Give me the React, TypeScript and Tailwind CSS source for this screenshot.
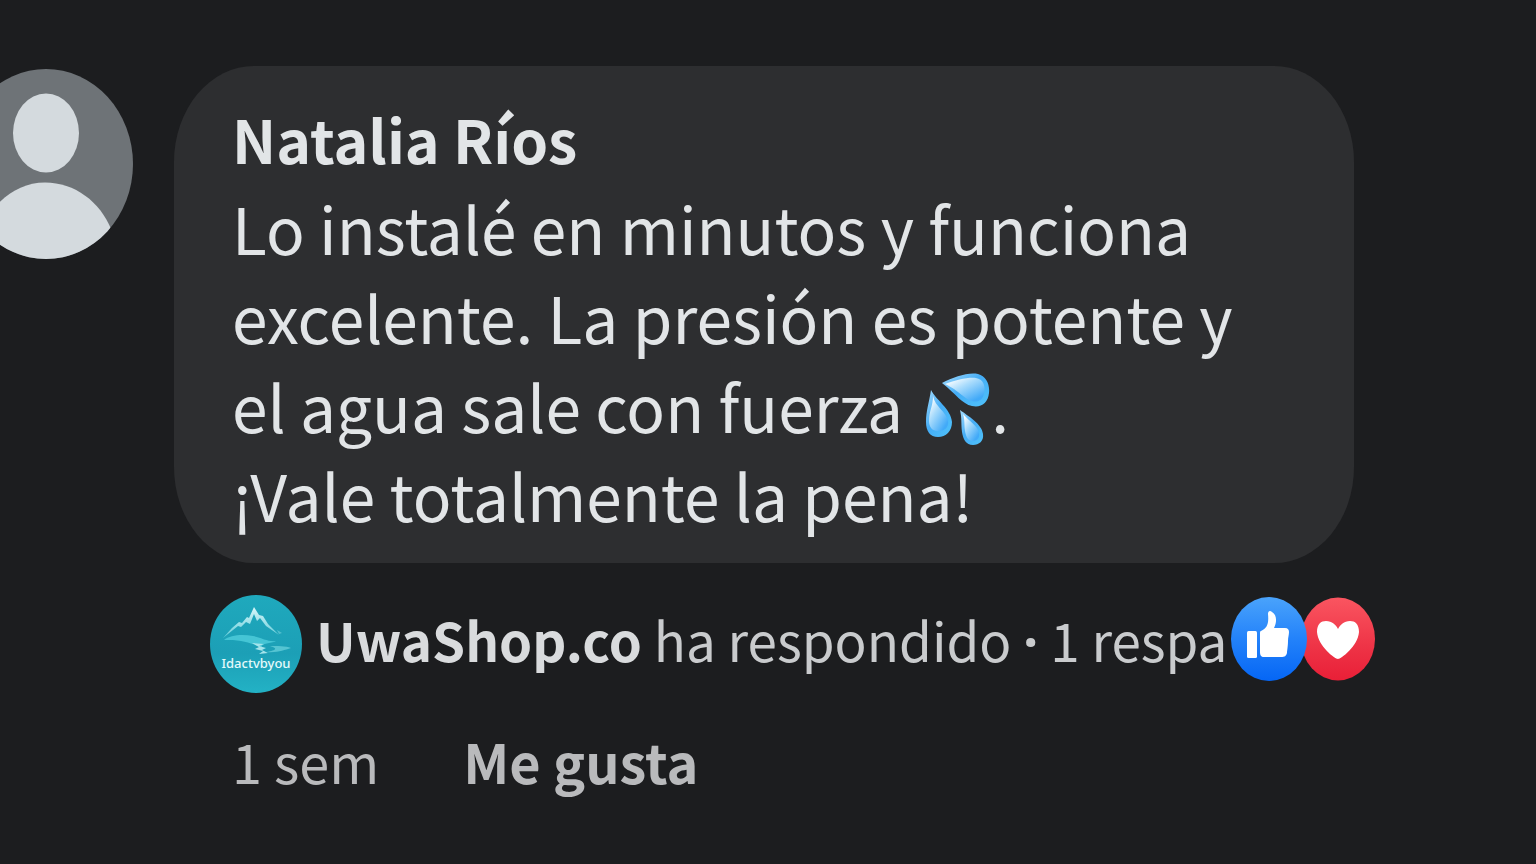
import React from "react";

function Avatar() {
  return (
    <svg
      viewBox="0 0 174 190"
      className="-ml-[41px] mt-[3px] h-[190px] w-[174px] shrink-0"
      role="img"
      aria-label="Natalia Ríos"
    >
      <defs>
        <clipPath id="avatar-clip">
          <ellipse cx="87" cy="95" rx="87" ry="95" />
        </clipPath>
      </defs>
      <g clipPath="url(#avatar-clip)">
        <rect width="174" height="190" fill="#6e7377" />
        <ellipse cx="87" cy="64" rx="33" ry="39.5" fill="#d4dade" />
        <path d="M17 190C17 150 48 113.500 86 113.500C116 113.500 141 133 152 160L152 190Z" fill="#d4dade" />
      </g>
    </svg>
  );
}

function ShopLogo() {
  return (
    <svg viewBox="0 0 92 98" className="h-[98px] w-[92px] shrink-0" role="img" aria-label="UwaShop.co">
      <defs>
        <linearGradient id="shop-bg" x1="0" y1="0" x2="0" y2="1">
          <stop offset="0" stopColor="#1fa9bd" />
          <stop offset="0.6" stopColor="#1c9fb6" />
          <stop offset="1" stopColor="#23b2c5" />
        </linearGradient>
        <linearGradient id="shop-peak" x1="0" y1="0" x2="0" y2="1">
          <stop offset="0" stopColor="#d9f7fa" />
          <stop offset="1" stopColor="#62cbd8" />
        </linearGradient>
      </defs>
      <ellipse cx="46" cy="49" rx="46" ry="49" fill="url(#shop-bg)" />
      <path
        d="M13 43L22 33L29 27L32 28L37 22L39 23L44 12L49 20L53 21L58 29L69 40L56 31L50 23L47 26L44 19L40 29L36 27L31 32L28 31Z"
        fill="url(#shop-peak)"
      />
      <path d="M67 35L72 38L69 39Z" fill="#54bfce" />
      <path d="M14 45C20 40 32 39 43 41C52 43 58 47 66 46C60 49 50 48 52 53C46 50 34 44 14 45Z" fill="#45c5d5" />
      <path d="M42 48L54 49L49 51L56 53L52 55L58 58L49 59L53 56L45 54L49 52Z" fill="#a5e4eb" />
      <path d="M56 57C68 58 74 55 81 53C76 51 67 51 60 51C67 53 68 55 56 57Z" fill="#55c4d2" />
      <text
        x="46"
        y="73"
        textAnchor="middle"
        fill="#e3fafb"
        fontFamily="'Noto Sans', sans-serif"
        fontWeight="500"
        fontSize="13"
      >
        Idactvbyou
      </text>
    </svg>
  );
}

function Droplets() {
  return (
    <svg viewBox="0 0 66 74" className="ml-2 inline-block h-[74px] w-[66px] align-[-14px]" role="img" aria-label="💦">
      <defs>
        <linearGradient id="drop-edge" x1="0" y1="0" x2="1" y2="1">
          <stop offset="0" stopColor="#a9defd" />
          <stop offset="0.45" stopColor="#45adf6" />
          <stop offset="1" stopColor="#4fc2fb" />
        </linearGradient>
        <linearGradient id="drop-fill" x1="0.1" y1="0.1" x2="0.8" y2="0.9">
          <stop offset="0" stopColor="#ffffff" />
          <stop offset="0.4" stopColor="#aadcfc" />
          <stop offset="1" stopColor="#42aaf8" />
        </linearGradient>
      </defs>
      <g fill="url(#drop-edge)">
        <path d="M17 10C29 4 43-1 53 1C61 3 65 11 64 20C63 30 56 35 47 33C37 31 31 21 17 10Z" />
        <path d="M6 17C11 27 26 36 27 49C27 58 21 64 13 64C5 64 1 58 1 49C1 38 4 30 6 17Z" />
        <path d="M35 37C43 43 57 51 58 61C59 68 54 72 48 72C41 72 38 66 37 59C36 51 37 45 35 37Z" />
      </g>
      <g fill="url(#drop-fill)">
        <path d="M20 11C31 7 43 4 51 5C58 6 61 13 59 20C58 27 53 30 47 28C39 26 35 18 20 11Z" />
        <path d="M8 23C10 34 21 38 23 48C24 55 19 58 13 58C7 58 4 54 4 48C4 38 8 33 8 23Z" />
        <path d="M38 41C44 48 53 53 54 60C55 65 52 68 48 68C43 68 41 64 40 58C39 51 40 47 38 41Z" />
      </g>
    </svg>
  );
}

function Reactions() {
  return (
    <svg viewBox="0 0 144 84" className="mt-0.5 ml-1 h-[84px] w-[144px] shrink-0" role="img" aria-label="Me gusta, Me encanta">
      <defs>
        <linearGradient id="like-bg" x1="0" y1="0" x2="0" y2="1">
          <stop offset="0" stopColor="#4aa3fb" />
          <stop offset="0.5" stopColor="#2382fa" />
          <stop offset="1" stopColor="#0566f5" />
        </linearGradient>
        <linearGradient id="love-bg" x1="0" y1="0" x2="0" y2="1">
          <stop offset="0" stopColor="#fa5560" />
          <stop offset="0.6" stopColor="#ee3346" />
          <stop offset="1" stopColor="#e91f37" />
        </linearGradient>
      </defs>
      <ellipse cx="107" cy="42" rx="37" ry="41.5" fill="url(#love-bg)" />
      <ellipse cx="38" cy="42" rx="38" ry="42" fill="url(#like-bg)" />
      <rect x="16" y="34" width="10" height="27" rx="1.5" fill="#fff" />
      <path
        d="M30 34C36 31 38 27 37 17C37 14 39 13 41 15C46 18 46 25 43 31H54C57 31 58 33 58 35C58 38 57 40 57 44C57 49 56 54 56 56C55 59 54 60 50 60H33C30 60 29 58 29 55V37C29 35 29 34 30 34Z"
        fill="#fff"
      />
      <path
        d="M107 62C104 62 87 49 86 35C86 27 90 24 95 24C101 24 105 28 107 32C109 28 113 24 119 24C124 24 128 27 128 35C127 49 110 62 107 62Z"
        fill="#fff"
      />
    </svg>
  );
}

export default function App() {
  return (
    <main
      lang="es"
      className="min-h-screen overflow-hidden bg-[#1c1d1f] pt-[66px] font-['Noto_Sans_CJK_SC','Noto_Sans',sans-serif] text-[#e2e5e7]"
    >
      <article className="flex items-start gap-[41px] pr-[182px]">
        <Avatar />
        <div className="min-w-0 flex-1">
          <div className="rounded-[80px/96px] bg-[#2d2e30] pt-7 pr-20 pb-6 pl-[58px]">
            <h2 className="text-[59px] leading-[89px] font-bold">Natalia Ríos</h2>
            <p className="text-[64px] leading-[89px]">
              Lo instalé en minutos y funciona excelente. La presión es potente y el agua sale con fuerza <Droplets />.
              <br />
              ¡Vale totalmente la pena!
            </p>
          </div>
          <div className="-mr-6 ml-9 mt-8 flex items-start">
            <ShopLogo />
            <p className="ml-[14px] whitespace-nowrap text-[53px] leading-[88px] text-[#c9cbcd]">
              <a href="#respuestas">
                <strong className="font-bold text-[#d9dbdd]">UwaShop.co</strong> ha respondido{" "}
                <span className="font-['Noto_Sans',sans-serif] font-bold">·</span> 1 respa
              </a>
            </p>
            <Reactions />
          </div>
          <footer className="mt-6 ml-[58px] flex gap-[84px] text-[54px] leading-[88px] text-[#b9babc]">
            <time>1 sem</time>
            <button type="button" className="font-bold">
              Me gusta
            </button>
          </footer>
        </div>
      </article>
    </main>
  );
}
